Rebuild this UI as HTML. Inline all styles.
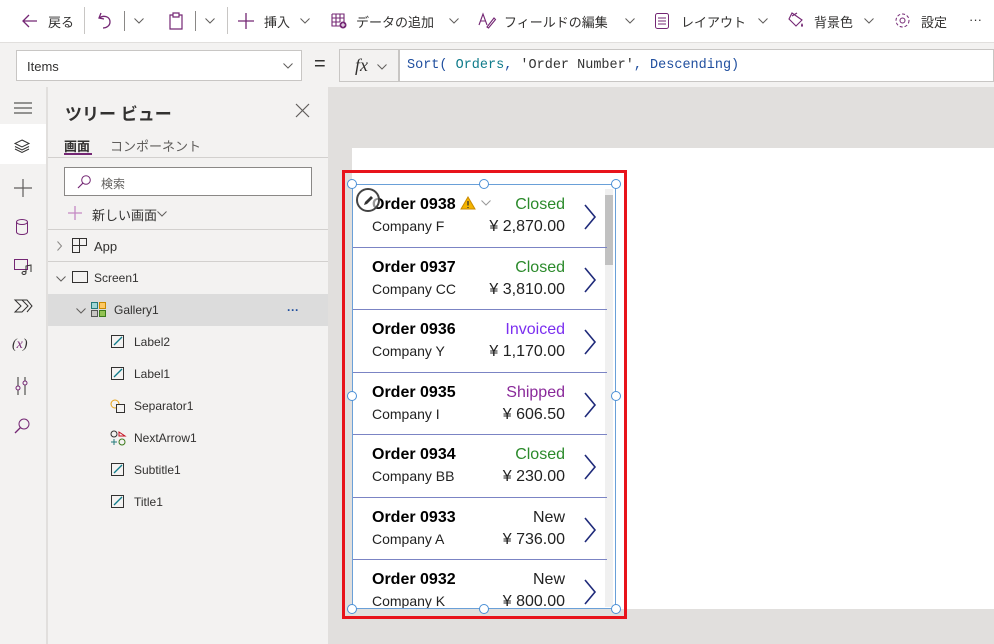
<!DOCTYPE html>
<html><head><meta charset="utf-8"><style>
*{box-sizing:border-box;margin:0;padding:0}
body{width:994px;height:644px;overflow:hidden;font-family:"Liberation Sans","Noto Sans CJK JP",sans-serif;background:#e1dfdd;position:relative;font-size:13px;color:#323130}
.a{position:absolute}
svg{overflow:visible}
.tb{left:0;top:0;width:994px;height:43px;background:#fff;border-bottom:1px solid #e1dfdd}
.tb span{position:absolute;top:12px;font-size:13px;color:#323130}
.tb svg{position:absolute}
.fb{left:0;top:43px;width:994px;height:44px;background:#f3f2f1}
.rail{left:0;top:87px;width:47px;height:557px;background:#f3f2f1;border-right:1px solid #e1dfdd}
.rail svg{position:absolute;left:14px}
.tree{left:48px;top:87px;width:281px;height:557px;background:#f3f2f1;border-right:1px solid #e1dfdd}
.row{position:absolute;left:0;width:280px;height:32px;font-size:12px}
.row span{position:absolute;top:9px}
.row svg{position:absolute}
.gal{left:352px;top:184px;width:264px;height:425px;border:1px solid #6aa0d8;background:#fff;overflow:hidden}
.it{position:absolute;left:0;width:254px;height:62.5px;border-bottom:1px solid #7b84c4}
.t{position:absolute;left:19px;top:11px;font-size:16px;font-weight:bold;color:#000}
.s{position:absolute;left:19px;top:33px;font-size:14px;color:#222}
.st{position:absolute;right:42px;top:11px;font-size:16px}
.p{position:absolute;right:42px;top:33px;font-size:16px;color:#222}
.ar{position:absolute;right:10px;top:19px}
.h{position:absolute;width:10px;height:10px;border:1px solid #4a8fd6;border-radius:50%;background:#fff}
</style></head><body>
<svg width="0" height="0" style="position:absolute"><defs><symbol id="cv" viewBox="0 0 10 6"><path d="M0.5 0.5 L5 5 L9.5 0.5" stroke="#605e5c" stroke-width="1" fill="none"/></symbol></defs></svg>
<div class="a tb">
<svg style="left:22px;top:14px" width="16" height="14"><path d="M15 7H1M7 1L1 7L7 13" stroke="#742774" stroke-width="1.3" fill="none"/></svg>
<span style="left:48px">戻る</span>
<div class="a" style="left:84px;top:7px;width:1px;height:27px;background:#c8c6c4"></div>
<svg style="left:98px;top:12px" width="14" height="18"><path d="M3 1L1 6L6 7M1.5 6C5 3 12 4 12 10C12 14 8 16 5 16" stroke="#742774" stroke-width="1.3" fill="none"/></svg>
<div class="a" style="left:124px;top:11px;width:1px;height:20px;background:#8a8886"></div>
<svg style="left:134px;top:18px" width="10" height="6"><use href="#cv"/></svg>
<svg style="left:169px;top:12px" width="14" height="18"><path d="M4 3H1V17H13V3H10M4 1H10V5H4Z" stroke="#742774" stroke-width="1.2" fill="none"/></svg>
<div class="a" style="left:195px;top:11px;width:1px;height:20px;background:#8a8886"></div>
<svg style="left:205px;top:18px" width="10" height="6"><use href="#cv"/></svg>
<div class="a" style="left:227px;top:7px;width:1px;height:27px;background:#c8c6c4"></div>
<svg style="left:238px;top:13px" width="16" height="16"><path d="M8 0V16M0 8H16" stroke="#742774" stroke-width="1.3"/></svg>
<span style="left:264px">挿入</span><svg style="left:300px;top:18px" width="10" height="6"><use href="#cv"/></svg>
<svg style="left:331px;top:13px" width="16" height="16"><path d="M1 1H13V9M1 1V13H9M1 5H13M1 9H9M5 1V13M9 1V9" stroke="#742774" stroke-width="1.1" fill="none"/><circle cx="12" cy="12" r="3.5" fill="#742774"/><path d="M12 10V14M10 12H14" stroke="#fff" stroke-width="1"/></svg>
<span style="left:356px">データの追加</span><svg style="left:449px;top:18px" width="10" height="6"><use href="#cv"/></svg>
<svg style="left:478px;top:12px" width="18" height="16"><path d="M1 13L5 2L9 13M2.5 9H7.5M9 15L16 6L17.5 7.5L10.5 16Z" stroke="#742774" stroke-width="1.1" fill="none"/></svg>
<span style="left:504px">フィールドの編集</span><svg style="left:625px;top:18px" width="10" height="6"><use href="#cv"/></svg>
<svg style="left:655px;top:13px" width="14" height="16"><rect x="0.5" y="0.5" width="13" height="15" rx="2" stroke="#742774" fill="none"/><path d="M3 5H11M3 8H11M3 11H11" stroke="#742774"/></svg>
<span style="left:681px">レイアウト</span><svg style="left:758px;top:18px" width="10" height="6"><use href="#cv"/></svg>
<svg style="left:788px;top:12px" width="17" height="17"><path d="M4 1L14 8L8 14L1 7Z M9 1L4 4" stroke="#742774" stroke-width="1.1" fill="none"/><path d="M14 11Q16 14 14 15Q12 14 14 11" fill="#742774"/></svg>
<span style="left:814px">背景色</span><svg style="left:864px;top:18px" width="10" height="6"><use href="#cv"/></svg>
<svg style="left:894px;top:12px" width="17" height="17"><circle cx="8.5" cy="8.5" r="2.5" stroke="#742774" fill="none"/><circle cx="8.5" cy="8.5" r="6.5" stroke="#742774" fill="none" stroke-dasharray="3 2"/></svg>
<span style="left:921px">設定</span><span style="left:969px">···</span>
</div>
<div class="a fb">
<div class="a" style="left:16px;top:7px;width:286px;height:31px;background:#fff;border:1px solid #c8c6c4;padding:8px 10px;font-size:13px;color:#323130">Items<svg style="position:absolute;right:8px;top:12px" width="10" height="6"><use href="#cv"/></svg></div>
<div class="a" style="left:314px;top:10px;font-size:20px">=</div>
<div class="a" style="left:339px;top:6px;width:60px;height:33px;background:#f3f2f1;border:1px solid #c8c6c4;padding:5px 15px;font-family:'Liberation Serif',serif;font-style:italic;font-size:18px">fx<svg style="position:absolute;left:37px;top:14px" width="10" height="6"><use href="#cv"/></svg></div>
<div class="a" style="left:399px;top:6px;width:595px;height:33px;background:#fff;border:1px solid #c8c6c4;padding:8px 7px;font-family:'Liberation Mono',monospace;font-size:13.5px;color:#1f4e9e">Sort( <span style="color:#0f7b8a">Orders</span>, <span style="color:#333">'Order Number'</span>, Descending)</div>
</div>
<div class="a rail">
<svg style="top:15px" width="18" height="12"><path d="M0 1H18M0 6H18M0 11H18" stroke="#323130" stroke-width="1.1"/></svg>
<div class="a" style="left:0;top:37px;width:46px;height:40px;background:#fff"></div>
<svg style="top:52px" width="16" height="14"><path d="M8 1L15 4.5L8 8L1 4.5Z M1 7.5L8 11L15 7.5 M1 10L8 13.5L15 10" stroke="#323130" fill="none"/></svg>
<svg style="top:92px" width="18" height="18"><path d="M9 0V18M0 9H18" stroke="#605e5c" stroke-width="1.2"/></svg>
<svg style="top:132px;left:16px" width="12" height="16"><ellipse cx="6" cy="3" rx="5.5" ry="2.5" stroke="#742774" fill="none"/><path d="M0.5 3V13A5.5 2.5 0 0 0 11.5 13V3" stroke="#742774" fill="none"/></svg>
<svg style="top:172px" width="18" height="16"><rect x="0.5" y="0.5" width="13" height="10" stroke="#742774" fill="none"/><path d="M12 14A2 1.5 0 1 1 12 13.9V7L17 6V13" stroke="#323130" fill="none"/></svg>
<svg style="top:212px" width="18" height="14"><path d="M1 1H8L14 7L8 13H1L7 7Z M7 1L13 1L18 7L13 13" stroke="#323130" fill="none"/></svg>
<div class="a" style="left:12px;top:250px;font-family:'Liberation Serif',serif;font-style:italic;font-size:14px;color:#323130">(<span style="color:#742774">x</span>)</div>
<svg style="top:290px;left:16px" width="12" height="18"><path d="M2 0V18M9 0V18" stroke="#323130"/><circle cx="2" cy="11" r="2" fill="#f3f2f1" stroke="#742774"/><circle cx="9" cy="6" r="2" fill="#f3f2f1" stroke="#742774"/></svg>
<svg style="top:331px" width="16" height="16"><circle cx="10" cy="6" r="5" stroke="#742774" fill="none"/><path d="M6.5 9.5L1 15" stroke="#742774" stroke-width="1.3"/></svg>
</div>
<div class="a tree">
<div class="a" style="left:17px;top:13px;font-size:17px;font-weight:bold">ツリー ビュー</div>
<svg class="a" style="left:248px;top:17px" width="13" height="13"><path d="M0 0L13 13M13 0L0 13" stroke="#605e5c" stroke-width="1.2"/></svg>
<div class="a" style="left:16px;top:49px;font-size:13px;font-weight:bold">画面</div>
<div class="a" style="left:16px;top:66px;width:28px;height:2px;background:#742774"></div>
<div class="a" style="left:62px;top:49px;font-size:13px;color:#605e5c">コンポーネント</div>
<div class="a" style="left:0;top:70px;width:280px;height:1px;background:#d2d0ce"></div>
<div class="a" style="left:16px;top:80px;width:248px;height:29px;background:#fff;border:1px solid #8a8886;padding:7px 0 0 36px;font-size:12px;color:#605e5c">検索<svg style="position:absolute;left:12px;top:7px" width="14" height="14"><circle cx="9" cy="5" r="4.3" stroke="#742774" fill="none"/><path d="M6 8L1 13" stroke="#742774" stroke-width="1.2"/></svg></div>
<svg class="a" style="left:20px;top:119px" width="14" height="14"><path d="M7 0V14M0 7H14" stroke="#c488c4" stroke-width="1.3"/></svg>
<div class="a" style="left:44px;top:118px;font-size:13px">新しい画面</div>
<svg class="a" style="left:109px;top:124px" width="10" height="6"><use href="#cv"/></svg>
<div class="a" style="left:0;top:142px;width:280px;height:1px;background:#d2d0ce"></div>
<div class="row" style="top:143px"><svg style="left:9px;top:11px" width="5" height="10"><path d="M0.5 0.5L4.5 5L0.5 9.5" stroke="#8a8886" fill="none"/></svg><svg style="left:24px;top:8px" width="15" height="15"><path d="M0.5 0.5H14.5V7.5H7.5V14.5H0.5Z M7.5 0.5V7.5 M0.5 7.5H7.5" stroke="#323130" fill="none"/></svg><span style="left:46px;font-size:13px">App</span></div>
<div class="a" style="left:0;top:174px;width:280px;height:1px;background:#d2d0ce"></div>
<div class="row" style="top:175px"><svg style="left:8px;top:14px" width="10" height="6"><use href="#cv"/></svg><svg style="left:24px;top:9px" width="16" height="12"><rect x="0.5" y="0.5" width="15" height="11" stroke="#323130" fill="none"/></svg><span style="left:46px">Screen1</span></div>
<div class="row" style="top:207px;background:#dcdcdc"><svg style="left:28px;top:14px" width="10" height="6"><use href="#cv"/></svg><svg style="left:43px;top:8px" width="15" height="15"><rect x="0.5" y="0.5" width="6" height="6" fill="#9fd6d6" stroke="#237a7a"/><rect x="8.5" y="0.5" width="6" height="6" fill="#ffc863" stroke="#c98a00"/><rect x="0.5" y="8.5" width="6" height="6" fill="#c8c6c4" stroke="#555"/><rect x="8.5" y="8.5" width="6" height="6" fill="#92c353" stroke="#3b7a1b"/></svg><span style="left:66px">Gallery1</span><span style="left:239px;color:#1f4e9e;font-weight:bold">···</span></div>
<div class="row" style="top:239px"><svg style="left:63px;top:9px" width="14" height="14"><rect x="0.5" y="0.5" width="12" height="12" stroke="#323130" fill="none"/><path d="M3 10L11 2" stroke="#0f7b8a" stroke-width="1.3"/></svg><span style="left:86px">Label2</span></div>
<div class="row" style="top:271px"><svg style="left:63px;top:9px" width="14" height="14"><rect x="0.5" y="0.5" width="12" height="12" stroke="#323130" fill="none"/><path d="M3 10L11 2" stroke="#0f7b8a" stroke-width="1.3"/></svg><span style="left:86px">Label1</span></div>
<div class="row" style="top:303px"><svg style="left:62px;top:8px" width="16" height="16"><circle cx="5" cy="6" r="4" stroke="#e8a317" fill="none"/><rect x="6.5" y="6.5" width="8" height="8" stroke="#323130" fill="#f3f2f1"/></svg><span style="left:86px">Separator1</span></div>
<div class="row" style="top:335px"><svg style="left:62px;top:8px" width="16" height="16"><circle cx="4" cy="4" r="3" stroke="#323130" fill="none"/><path d="M9 2L15 6L9 6Z" stroke="#c50f1f" fill="none"/><path d="M1 12H7M4 9V15" stroke="#237a7a"/><circle cx="12" cy="12" r="3" stroke="#3b7a1b" fill="none"/></svg><span style="left:86px">NextArrow1</span></div>
<div class="row" style="top:367px"><svg style="left:63px;top:9px" width="14" height="14"><rect x="0.5" y="0.5" width="12" height="12" stroke="#323130" fill="none"/><path d="M3 10L11 2" stroke="#0f7b8a" stroke-width="1.3"/></svg><span style="left:86px">Subtitle1</span></div>
<div class="row" style="top:399px"><svg style="left:63px;top:9px" width="14" height="14"><rect x="0.5" y="0.5" width="12" height="12" stroke="#323130" fill="none"/><path d="M3 10L11 2" stroke="#0f7b8a" stroke-width="1.3"/></svg><span style="left:86px">Title1</span></div>
</div>
<div class="a" style="left:352px;top:148px;width:642px;height:461px;background:#fff"></div>
<div class="a gal">
<div class="a" style="right:2px;top:4px;width:8px;height:418px;background:#f0f0f0"></div>
<div class="a" style="right:2px;top:10px;width:8px;height:70px;background:#c1c1c1"></div>
<div class="it" style="top:0"><div class="t">Order 0938 <svg width="16" height="14" style="vertical-align:-1px"><path d="M8 1L15 13H1Z" fill="#f4b400" stroke="#c98a00"/><path d="M8 5V9.5M8 11V12" stroke="#333" stroke-width="1.3"/></svg> <svg width="10" height="6" style="vertical-align:3px"><path d="M0.5 0.5L5 5L9.5 0.5" stroke="#999" fill="none"/></svg></div><div class="s">Company F</div><div class="st" style="color:#2b8a2b">Closed</div><div class="p">¥ 2,870.00</div><svg class="ar" width="14" height="26"><path d="M2 1 L12 13 L2 25" stroke="#1f2a7a" stroke-width="1.6" fill="none"/></svg></div>
<div class="it" style="top:62.5px"><div class="t">Order 0937</div><div class="s">Company CC</div><div class="st" style="color:#2b8a2b">Closed</div><div class="p">¥ 3,810.00</div><svg class="ar" width="14" height="26"><path d="M2 1 L12 13 L2 25" stroke="#1f2a7a" stroke-width="1.6" fill="none"/></svg></div>
<div class="it" style="top:125px"><div class="t">Order 0936</div><div class="s">Company Y</div><div class="st" style="color:#7b2ff0">Invoiced</div><div class="p">¥ 1,170.00</div><svg class="ar" width="14" height="26"><path d="M2 1 L12 13 L2 25" stroke="#1f2a7a" stroke-width="1.6" fill="none"/></svg></div>
<div class="it" style="top:187.5px"><div class="t">Order 0935</div><div class="s">Company I</div><div class="st" style="color:#8a2a9a">Shipped</div><div class="p">¥ 606.50</div><svg class="ar" width="14" height="26"><path d="M2 1 L12 13 L2 25" stroke="#1f2a7a" stroke-width="1.6" fill="none"/></svg></div>
<div class="it" style="top:250px"><div class="t">Order 0934</div><div class="s">Company BB</div><div class="st" style="color:#2b8a2b">Closed</div><div class="p">¥ 230.00</div><svg class="ar" width="14" height="26"><path d="M2 1 L12 13 L2 25" stroke="#1f2a7a" stroke-width="1.6" fill="none"/></svg></div>
<div class="it" style="top:312.5px"><div class="t">Order 0933</div><div class="s">Company A</div><div class="st" style="color:#222">New</div><div class="p">¥ 736.00</div><svg class="ar" width="14" height="26"><path d="M2 1 L12 13 L2 25" stroke="#1f2a7a" stroke-width="1.6" fill="none"/></svg></div>
<div class="it" style="top:375px;border:none"><div class="t">Order 0932</div><div class="s">Company K</div><div class="st" style="color:#222">New</div><div class="p">¥ 800.00</div><svg class="ar" width="14" height="26"><path d="M2 1 L12 13 L2 25" stroke="#1f2a7a" stroke-width="1.6" fill="none"/></svg></div>
</div>
<div class="a" style="left:356px;top:188px;width:24px;height:24px;border:2px solid #444;border-radius:50%;background:rgba(255,255,255,.6)"><svg style="position:absolute;left:5px;top:4px" width="12" height="12"><path d="M1 11L2 8L8 2L10 4L4 10Z" fill="#333"/></svg></div>
<div class="h" style="left:347px;top:179px"></div><div class="h" style="left:479px;top:179px"></div><div class="h" style="left:611px;top:179px"></div>
<div class="h" style="left:347px;top:391px"></div><div class="h" style="left:611px;top:391px"></div>
<div class="h" style="left:347px;top:604px"></div><div class="h" style="left:479px;top:604px"></div><div class="h" style="left:611px;top:604px"></div>
<div class="a" style="left:342px;top:170px;width:285px;height:449px;border:3px solid #e8131b"></div>
</body></html>
